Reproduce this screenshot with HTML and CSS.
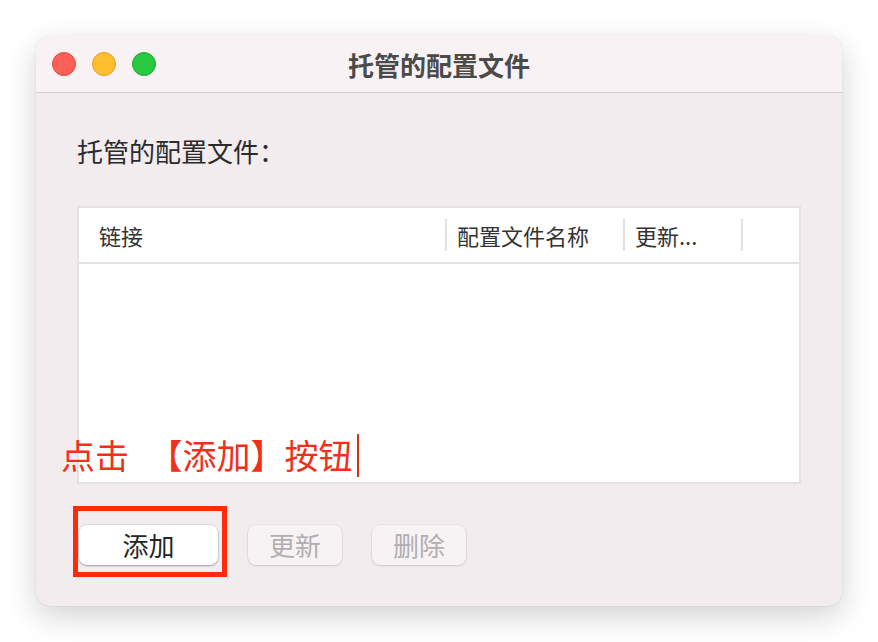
FILE: index.html
```html
<!DOCTYPE html>
<html lang="zh-CN">
<head>
    <meta charset="UTF-8">
    <title>托管的配置文件</title>
    <link rel="stylesheet" href="styles.css">
</head>
<body>
    <div class="window">
        <div class="titlebar">
            <div class="lights">
                <span class="light red"></span>
                <span class="light yellow"></span>
                <span class="light green"></span>
            </div>
            <div class="title">托管的配置文件</div>
            <div></div>
        </div>

        <div class="content">
            <div class="label">托管的配置文件：</div>

            <div class="table">
                <div class="thead">
                    <div class="th first">链接</div>
                    <div class="th">配置文件名称</div>
                    <div class="th">更新...</div>
                    <div class="th"></div>
                </div>
                <div class="tbody"></div>
                <div class="note">点击 【添加】按钮<span class="caret"></span></div>
            </div>

            <div class="actions">
                <button class="btn primary">添加</button>
                <button class="btn" disabled>更新</button>
                <button class="btn" disabled>删除</button>
                <span class="mark"></span>
            </div>
        </div>
    </div>
</body>
</html>
```

FILE: styles.css
```css
body {
    margin: 0;
    padding: 36px;
    background: #ffffff;
    font-family: "Noto Sans CJK SC", "Noto Sans", sans-serif;
}
.window {
    width: 806px;
    height: 570px;
    border-radius: 14px;
    background: #f2ecef;
    box-shadow: 0 10px 30px rgba(0,0,0,0.18), 0 0 1px rgba(0,0,0,0.2);
    overflow: hidden;
}
.titlebar {
    height: 56px;
    background: #f8f2f5;
    border-bottom: 1px solid #d4cdd1;
    display: grid;
    grid-template-columns: 1fr auto 1fr;
    align-items: center;
}
.lights {
    display: flex;
    gap: 16px;
    padding-left: 16px;
}
.light {
    width: 24px;
    height: 24px;
    border-radius: 50%;
    box-sizing: border-box;
}
.light.red {
    background: #fe5f57;
    border: 1px solid #e2463f;
}
.light.yellow {
    background: #febc2e;
    border: 1px solid #e1a02a;
}
.light.green {
    background: #28c840;
    border: 1px solid #1fa934;
}
.title {
    font-size: 26px;
    font-weight: bold;
    color: #4a4a4a;
}
.content {
    padding: 40px 41px 0 41px;
}
.label {
    font-size: 26px;
    line-height: 36px;
    color: #2b2b2b;
}
.table {
    position: relative;
    margin-top: 37px;
    height: 278px;
    box-sizing: border-box;
    background: #ffffff;
    border: 2px solid #e4e1e2;
}
.thead {
    display: grid;
    grid-template-columns: 366px 178px 118px 1fr;
    align-items: center;
    height: 54px;
    border-bottom: 2px solid #e4e1e2;
}
.th {
    height: 32px;
    font-size: 22px;
    line-height: 32px;
    color: #333333;
    padding-left: 10px;
    border-left: 2px solid #e2dfe0;
}
.th.first {
    padding-left: 20px;
    border-left: none;
}
.note {
    position: absolute;
    left: -18px;
    top: 225px;
    display: flex;
    align-items: center;
    font-size: 34px;
    line-height: 44px;
    word-spacing: 12px;
    color: #f0301a;
    white-space: pre;
}
.caret {
    display: inline-block;
    width: 2px;
    height: 43px;
    margin-left: 4px;
    background: #d8301e;
}
.actions {
    position: relative;
    display: flex;
    gap: 30px;
    margin-top: 41px;
    padding-left: 2px;
}
.btn {
    width: 94px;
    height: 40px;
    border: none;
    border-radius: 8px;
    font-family: inherit;
    font-size: 26px;
    line-height: 40px;
    padding: 0;
    background: #f7f3f5;
    color: #b2aeb0;
    box-shadow: 0 0 0 0.5px rgba(0,0,0,0.08), 0 1px 2px rgba(0,0,0,0.12);
}
.btn.primary {
    width: 139px;
    background: #ffffff;
    color: #262626;
    box-shadow: 0 0 0 0.5px rgba(0,0,0,0.12), 0 1px 2px rgba(0,0,0,0.3);
}
.mark {
    position: absolute;
    left: -4px;
    top: -19px;
    width: 144px;
    height: 61px;
    border: 5px solid #fe2a0c;
}
```
